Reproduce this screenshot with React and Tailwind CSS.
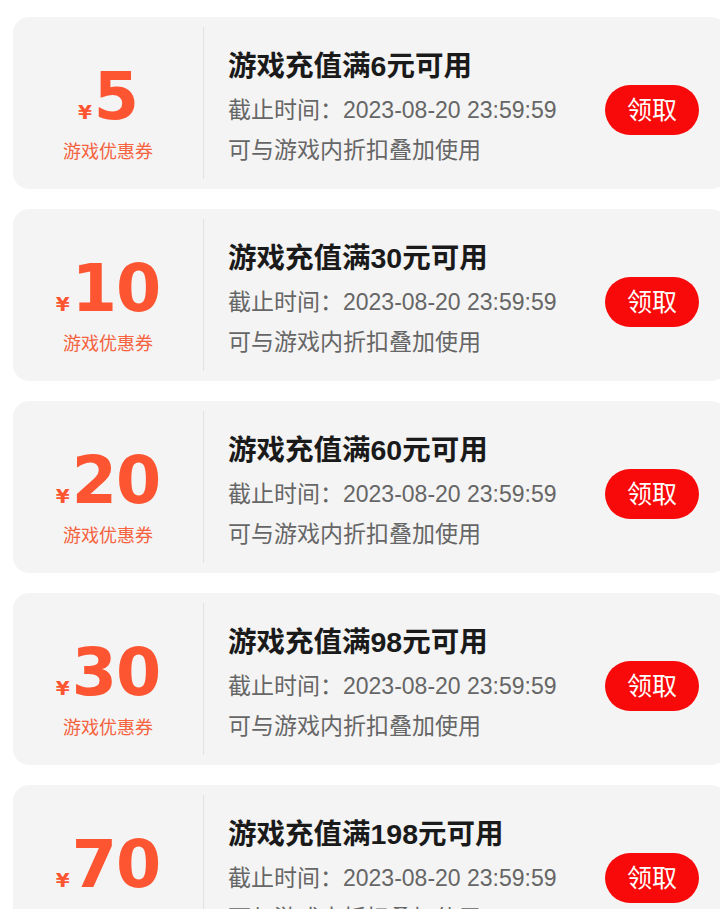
import React from 'react';

const coupons = [
  { amount: '5', min: '6' },
  { amount: '10', min: '30' },
  { amount: '20', min: '60' },
  { amount: '30', min: '98' },
  { amount: '70', min: '198' },
];

function CouponCard({ amount, min }) {
  return (
    <div className="flex h-[172px] w-[714px] shrink-0 rounded-[16px] bg-[#f4f4f4]">
      {/* Amount */}
      <div className="flex w-[190px] flex-col items-center pt-[47px]">
        <div className="flex items-baseline font-['DejaVu_Sans',sans-serif] text-[#fd5531]">
          <span className="mr-[2px] text-[20px] font-bold leading-none">¥</span>
          <span className="text-[65px] font-bold leading-none tracking-[-1px]">{amount}</span>
        </div>
        <div className="mt-[11px] text-[18px] leading-[24px] text-[#f5633f]">游戏优惠券</div>
      </div>

      <div className="my-[10px] w-px bg-[#e2e2e2]" />

      {/* Details */}
      <div className="flex flex-1 justify-between pl-[24px] pr-[28px] pt-[31px]">
        <div className="flex flex-col">
          <div className="text-[28.5px] font-bold leading-[36px] text-[#1a1a1a]">游戏充值满{min}元可用</div>
          <div className="mt-[6px] text-[23px] leading-[40px] text-[#666666]">截止时间：2023-08-20 23:59:59</div>
          <div className="text-[23px] leading-[40px] text-[#666666]">可与游戏内折扣叠加使用</div>
        </div>
        <button className="mt-[37px] h-[50px] w-[94px] rounded-full bg-[#f90a0a] text-[25px] leading-none text-white">
          领取
        </button>
      </div>
    </div>
  );
}

export default function App() {
  return (
    <div
      className="w-[720px] overflow-x-hidden bg-white"
      style={{ fontFamily: '"Liberation Sans", "Noto Sans CJK SC", sans-serif' }}
    >
      <div className="flex flex-col gap-[20px] pl-[13px] pt-[17px] pb-[20px]">
        {coupons.map((c) => (
          <CouponCard key={c.amount} {...c} />
        ))}
      </div>
    </div>
  );
}
